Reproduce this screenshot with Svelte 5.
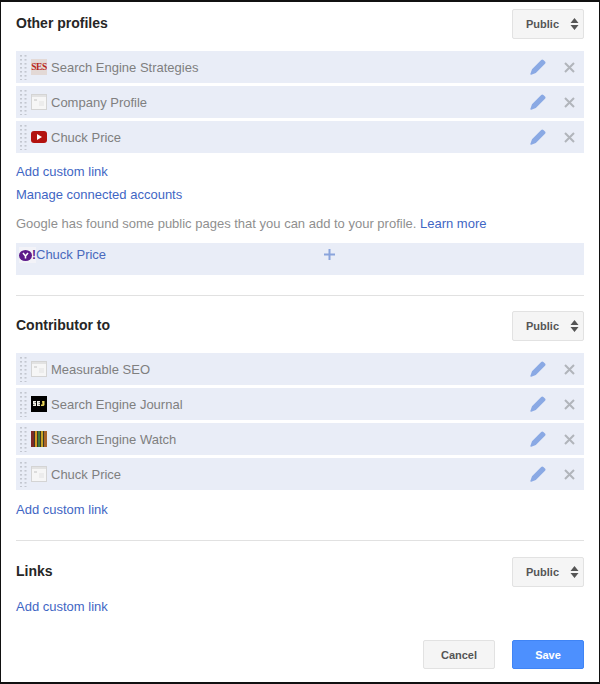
<script>
  const otherProfiles = [
    { name: "Search Engine Strategies", icon: "ses" },
    { name: "Company Profile", icon: "page" },
    { name: "Chuck Price", icon: "youtube" }
  ]
  const contributorTo = [
    { name: "Measurable SEO", icon: "page" },
    { name: "Search Engine Journal", icon: "sej" },
    { name: "Search Engine Watch", icon: "sew" },
    { name: "Chuck Price", icon: "page" }
  ]
</script>

{#snippet visibility()}
  <button type="button" class="select">
    <span>Public</span>
    <svg width="9" height="14" viewBox="0 0 9 14" aria-hidden="true">
      <path d="M4.5 1 8.5 6H.5zM4.5 13 .5 8h8z" fill="#555" />
    </svg>
  </button>
{/snippet}

{#snippet grip()}
  <svg class="grip" width="7" height="25" viewBox="0 0 7 25" aria-hidden="true">
    {#each [0, 4, 8, 12, 16, 20, 24] as y}
      <rect x="0" y={y} width="2" height="1.6" fill="#c3c7d0" />
      <rect x="4.5" y={y} width="2" height="1.6" fill="#c3c7d0" />
    {/each}
  </svg>
{/snippet}

{#snippet favicon(icon)}
  {#if icon === "ses"}
    <span class="favicon ses">SES</span>
  {:else if icon === "page"}
    <svg class="favicon" width="16" height="16" viewBox="0 0 16 16" aria-hidden="true">
      <rect x=".5" y=".5" width="15" height="15" fill="#f6f6f6" stroke="#d4d4d4" />
      <rect x="1" y="1" width="14" height="2" fill="#e2e2e2" />
      <rect x="3" y="5" width="3" height="2" fill="#dcdcdc" />
      <rect x="8" y="7" width="5" height="5" fill="#ececec" />
    </svg>
  {:else if icon === "youtube"}
    <svg class="favicon" width="16" height="16" viewBox="0 0 16 16" aria-hidden="true">
      <rect x="0" y="2" width="16" height="12" rx="3" fill="#b3120f" />
      <path d="M6 5 11 8 6 11z" fill="#fff" />
    </svg>
  {:else if icon === "sej"}
    <svg class="favicon" width="16" height="16" viewBox="0 0 16 16" aria-hidden="true">
      <rect width="16" height="16" fill="#000" />
      <path d="M2 5h3v1.5H3.5V7H5v3H2V8.5h1.5V8H2zM6 5h3v1.5H7.5V7H9v1H7.500v.5H9V10H6z" fill="#efefe6" />
      <path d="M11 5h2.500v4L12.500 10H10V8.500h1.500z" fill="#e9d65a" />
    </svg>
  {:else if icon === "sew"}
    <svg class="favicon" width="16" height="16" viewBox="0 0 16 16" aria-hidden="true">
      <rect width="16" height="16" fill="#3a3a2a" />
      <rect x="0" width="3" height="16" fill="#7d2a24" />
      <rect x="4" width="2" height="16" fill="#d89a22" />
      <rect x="7" width="2" height="16" fill="#3f7a3a" />
      <rect x="10" width="2" height="16" fill="#c7a326" />
      <rect x="13" width="3" height="16" fill="#a8652b" />
    </svg>
  {/if}
{/snippet}

{#snippet row(item)}
  <li class="row">
    {@render grip()}
    {@render favicon(item.icon)}
    <span class="name">{item.name}</span>
    <svg class="pencil" width="16" height="16" viewBox="0 0 16 16" aria-hidden="true">
      <path d="M11.2 1a1.6 1.600 0 0 1 2.200 0l1.600 1.600a1.600 1.600 0 0 1 0 2.200L5.800 14 1.300 15.700a.7.700 0 0 1-.9-.9L2 10.200z" fill="#8aa9e4" />
    </svg>
    <svg class="remove" width="11" height="11" viewBox="0 0 11 11" aria-hidden="true">
      <path d="M1 1 10 10M10 1 1 10" stroke="#b1b5bb" stroke-width="2" fill="none" />
    </svg>
  </li>
{/snippet}

<div class="panel">
  <header class="section-head">
    <h2>Other profiles</h2>
    {@render visibility()}
  </header>
  <ul class="rows">
    {#each otherProfiles as item}
      {@render row(item)}
    {/each}
  </ul>
  <a class="link add first-add" href="#add">Add custom link</a>
  <a class="link manage" href="#manage">Manage connected accounts</a>
  <p class="hint">Google has found some public pages that you can add to your profile. <a class="link inline" href="#learn">Learn more</a></p>
  <div class="suggestion">
    <span class="yahoo"><svg width="13" height="11" viewBox="0 0 13 11" aria-hidden="true"><ellipse cx="6.5" cy="5.5" rx="6.5" ry="5.5" fill="#5c1a8a" /><path d="M4 3 6.5 6 9 3M6.5 6v2.4" stroke="#fff" stroke-width="1.5" fill="none" /></svg><b>!</b></span>
    <span class="suggestion-name">Chuck Price</span>
    <svg class="plus" width="11" height="11" viewBox="0 0 11 11" aria-hidden="true">
      <path d="M5.5 0v11M0 5.500h11" stroke="#8aa4dc" stroke-width="2" />
    </svg>
  </div>

  <hr class="rule-one" />

  <header class="section-head">
    <h2>Contributor to</h2>
    {@render visibility()}
  </header>
  <ul class="rows">
    {#each contributorTo as item}
      {@render row(item)}
    {/each}
  </ul>
  <a class="link add" href="#add">Add custom link</a>

  <hr class="rule-two" />

  <header class="section-head">
    <h2>Links</h2>
    {@render visibility()}
  </header>
  <a class="link add" href="#add">Add custom link</a>

  <footer class="actions">
    <button type="button" class="btn cancel">Cancel</button>
    <button type="button" class="btn save">Save</button>
  </footer>
</div>

<style>
  :global(body) {
    margin: 0;
    background: #fff;
  }

  .panel {
    box-sizing: border-box;
    width: 600px;
    height: 684px;
    padding: 7px 15px 0 15px;
    border: 1px solid #111;
    border-top-width: 2px;
    border-bottom-width: 2px;
    font-family: "Liberation Sans", Arial, sans-serif;
    font-size: 13px;
    color: #777;
    display: flex;
    flex-direction: column;
    align-items: stretch;
    overflow: hidden;
  }

  .section-head {
    display: flex;
    justify-content: space-between;
    align-items: center;
    height: 30px;
  }

  h2 {
    margin: 0 0 2px;
    font-size: 14px;
    font-weight: 700;
    color: #262626;
  }

  .select {
    box-sizing: border-box;
    width: 72px;
    height: 30px;
    padding: 0 4px 0 13px;
    display: flex;
    align-items: center;
    justify-content: space-between;
    background: #f5f5f5;
    border: 1px solid #e2e2e2;
    border-radius: 2px;
    font: 700 11px "Liberation Sans", Arial, sans-serif;
    color: #555;
  }

  .rows {
    list-style: none;
    margin: 12px 0 0;
    padding: 0;
    display: flex;
    flex-direction: column;
    gap: 3px;
  }

  .row {
    height: 32px;
    display: flex;
    align-items: center;
    background: #e9edf7;
  }

  .grip {
    margin: 0 0 0 4px;
  }

  .favicon {
    margin-left: 4px;
    flex: none;
  }

  .ses {
    box-sizing: border-box;
    width: 16px;
    height: 16px;
    background: #e3d9d6;
    color: #b8261c;
    font: 700 9.5px/16px "Liberation Serif", serif;
    text-align: center;
    letter-spacing: -0.4px;
    overflow: hidden;
  }

  .name {
    margin-left: 4px;
    flex: 1;
    color: #7f7f7f;
  }

  .pencil {
    margin-right: 18px;
  }

  .remove {
    margin-right: 9px;
  }

  .link {
    color: #3f66c4;
    text-decoration: none;
    align-self: flex-start;
    line-height: 16px;
  }

  .add {
    margin-top: 12px;
  }

  .first-add {
    margin-top: 11px;
  }

  .manage {
    margin-top: 7px;
  }

  .hint {
    margin: 13px 0 0;
    line-height: 16px;
    color: #8f8f8f;
    font-size: 13px;
  }

  .suggestion {
    position: relative;
    margin-top: 11px;
    height: 32px;
    display: flex;
    align-items: flex-start;
    background: #e9edf7;
    padding-top: 4px;
    box-sizing: border-box;
  }

  .yahoo {
    margin-left: 3px;
    width: 17px;
    height: 16px;
    display: flex;
    align-items: center;
    background: #f3f3f8;
  }

  .yahoo b {
    color: #5c1a8a;
    font-size: 12px;
    line-height: 11px;
  }

  .suggestion-name {
    color: #4a69bd;
    line-height: 16px;
  }

  .plus {
    position: absolute;
    left: 308px;
    top: 6px;
  }

  hr {
    margin: 0;
    border: 0;
    border-top: 1px solid #e1e1e1;
  }

  .rule-one {
    margin-top: 20px;
    margin-bottom: 15px;
  }

  .rule-two {
    margin-top: 22px;
    margin-bottom: 16px;
  }

  .actions {
    margin-top: 25px;
    display: flex;
    justify-content: flex-end;
    gap: 17px;
  }

  .btn {
    box-sizing: border-box;
    width: 72px;
    height: 29px;
    border-radius: 2px;
    font: 700 11px "Liberation Sans", Arial, sans-serif;
  }

  .cancel {
    background: #f5f5f5;
    border: 1px solid #e2e2e2;
    color: #555;
  }

  .save {
    background: #4d90fe;
    border: 1px solid #3f84f5;
    color: #fff;
  }
</style>
